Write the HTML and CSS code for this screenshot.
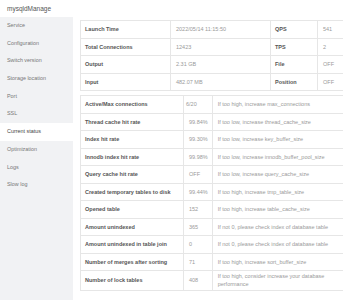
FILE: index.html
```html
<!DOCTYPE html>
<html lang="en">
<head>
  <meta charset="UTF-8" />
  <title>mysqldManage</title>
  <link rel="stylesheet" href="styles.css">
</head>
<body>
  <div class="header">mysqldManage</div>
  <div class="layout">
    <ul class="menu">
      <li>Service</li>
      <li>Configuration</li>
      <li>Switch version</li>
      <li>Storage location</li>
      <li>Port</li>
      <li>SSL</li>
      <li class="active">Current status</li>
      <li>Optimization</li>
      <li>Logs</li>
      <li>Slow log</li>
    </ul>

    <div class="main">
      <table class="info">
        <tr>
          <td class="label c1">Launch Time</td>
          <td class="value c2">2022/05/14 11:15:50</td>
          <td class="label c3">QPS</td>
          <td class="value">541</td>
        </tr>
        <tr>
          <td class="label">Total Connections</td>
          <td class="value">12423</td>
          <td class="label">TPS</td>
          <td class="value">2</td>
        </tr>
        <tr>
          <td class="label">Output</td>
          <td class="value">2.31 GB</td>
          <td class="label">File</td>
          <td class="value">OFF</td>
        </tr>
        <tr>
          <td class="label">Input</td>
          <td class="value">482.07 MB</td>
          <td class="label">Position</td>
          <td class="value">OFF</td>
        </tr>
      </table>

      <table class="status">
        <tr>
          <td class="label s1">Active/Max connections</td>
          <td class="value s2">6/20</td>
          <td class="value">If too high, increase max_connections</td>
        </tr>
        <tr>
          <td class="label">Thread cache hit rate</td>
          <td class="value">99.84%</td>
          <td class="value">If too low, increase thread_cache_size</td>
        </tr>
        <tr>
          <td class="label">Index hit rate</td>
          <td class="value">99.30%</td>
          <td class="value">If too low, increase key_buffer_size</td>
        </tr>
        <tr>
          <td class="label">Innodb index hit rate</td>
          <td class="value">99.98%</td>
          <td class="value">If too low, increase innodb_buffer_pool_size</td>
        </tr>
        <tr>
          <td class="label">Query cache hit rate</td>
          <td class="value">OFF</td>
          <td class="value">If too low, increase query_cache_size</td>
        </tr>
        <tr>
          <td class="label">Created temporary tables to disk</td>
          <td class="value">99.44%</td>
          <td class="value">If too high, increase tmp_table_size</td>
        </tr>
        <tr>
          <td class="label">Opened table</td>
          <td class="value">152</td>
          <td class="value">If too high, increase table_cache_size</td>
        </tr>
        <tr>
          <td class="label">Amount unindexed</td>
          <td class="value">365</td>
          <td class="value">If not 0, please check index of database table</td>
        </tr>
        <tr>
          <td class="label">Amount unindexed in table join</td>
          <td class="value">0</td>
          <td class="value">If not 0, please check index of database table</td>
        </tr>
        <tr>
          <td class="label">Number of merges after sorting</td>
          <td class="value">71</td>
          <td class="value">If too high, increase sort_buffer_size</td>
        </tr>
        <tr class="tall">
          <td class="label">Number of lock tables</td>
          <td class="value">408</td>
          <td class="value">If too high, consider increase your database performance</td>
        </tr>
      </table>
    </div>
  </div>
</body>
</html>
```

FILE: styles.css
```css
body {
  margin: 0;
  font-family: "Liberation Sans", Arial, sans-serif;
  background-color: #ffffff;
  width: 343px;
  height: 300px;
  overflow: hidden;
}

.header {
  height: 17px;
  line-height: 17px;
  padding-left: 7px;
  font-size: 6.5px;
  color: #555;
}

.layout {
  display: flex;
  height: 283px;
}

.menu {
  list-style: none;
  margin: 0;
  padding: 0;
  width: 73px;
  flex-shrink: 0;
  background-color: #f1f2f4;
}

.menu li {
  height: 17.7px;
  line-height: 17.7px;
  padding-left: 7px;
  font-size: 5.4px;
  color: #777;
}

.menu li.active {
  background-color: #ffffff;
  color: #444;
}

.main {
  flex: 1;
  padding: 3px 0 0 7px;
  overflow: hidden;
}

table {
  width: 100%;
  border-collapse: collapse;
  font-size: 5.5px;
}

td {
  border: 1px solid #e6e6e6;
  height: 16.5px;
  padding: 0 4px;
  vertical-align: middle;
}

td:last-child {
  border-right: none;
}

.label {
  color: #555;
  font-weight: bold;
}

.value {
  color: #9a9a9a;
  padding-left: 5px;
}

.info {
  margin-bottom: 4px;
}

.c1 { width: 81px; }
.c2 { width: 90px; }
.c3 { width: 38px; }

.s1 { width: 94px; }
.s2 { width: 16px; padding-left: 2px; }

.status .tall td {
  height: 19px;
  line-height: 7.5px;
}
```
